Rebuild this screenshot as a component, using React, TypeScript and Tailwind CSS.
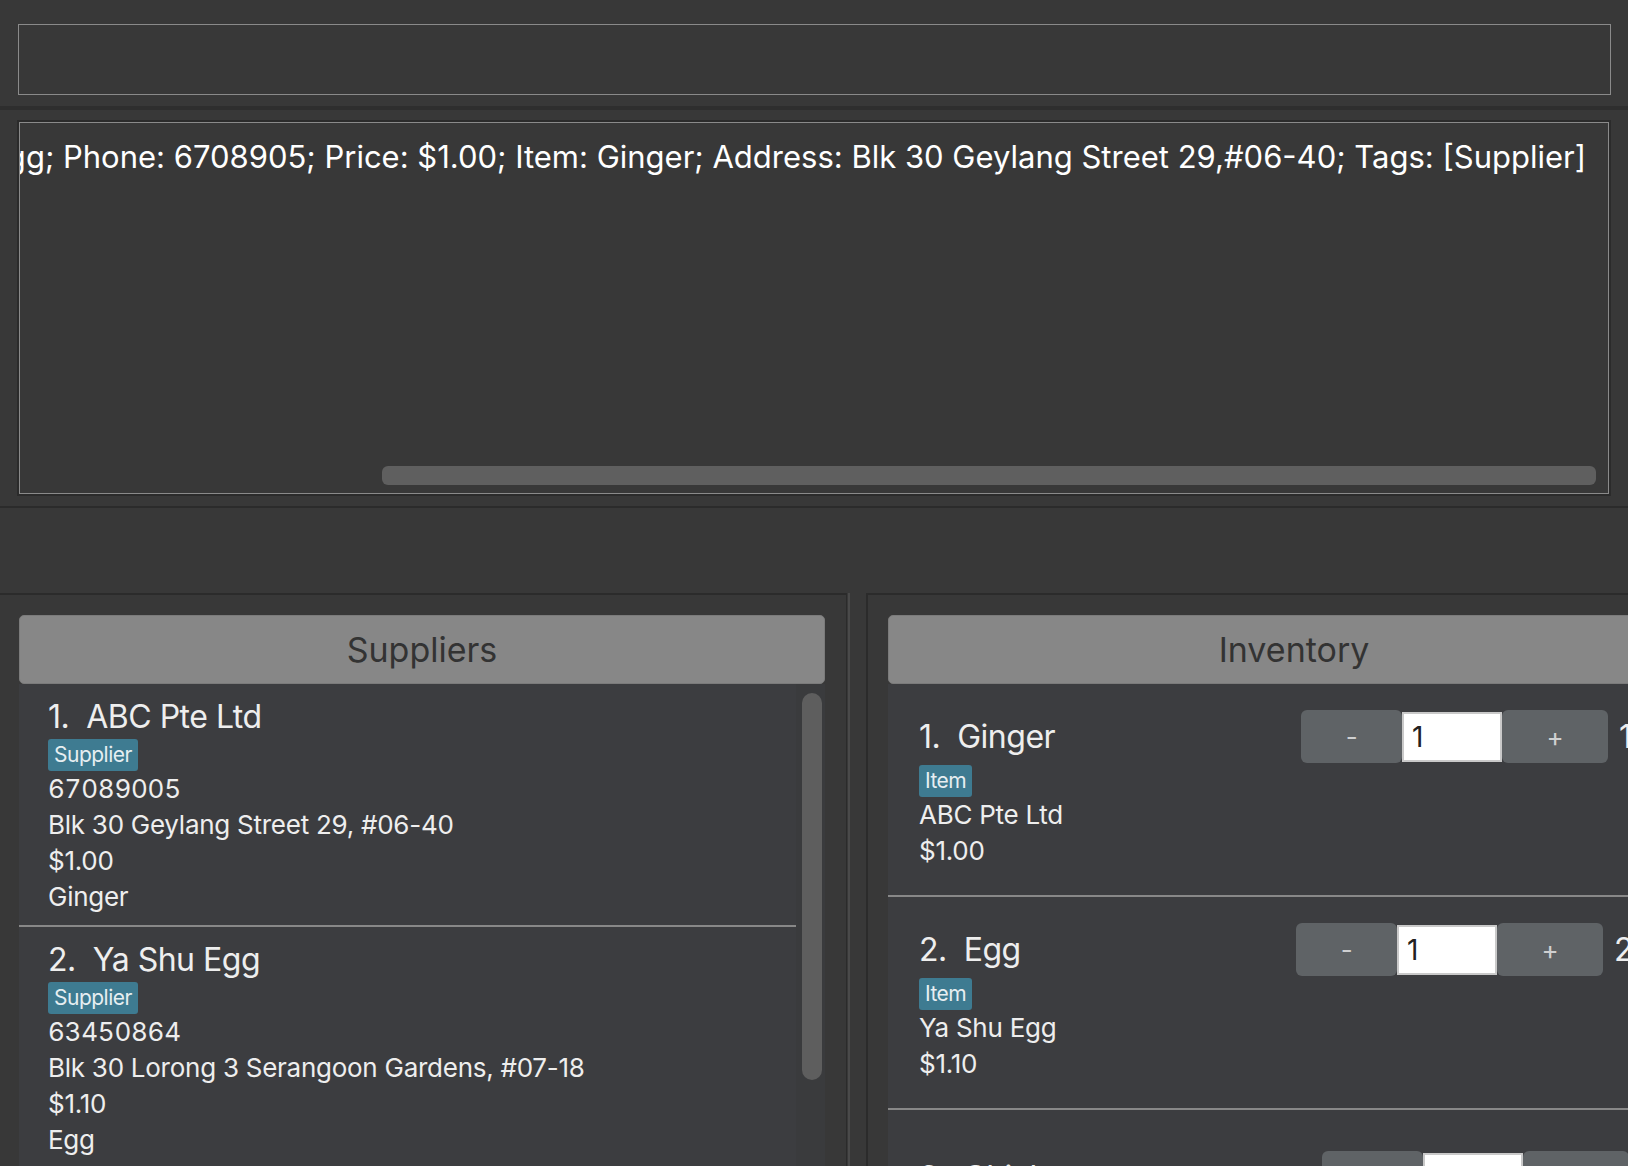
import React from 'react'

const SUPPLIERS = [
  {
    name: 'ABC Pte Ltd',
    phone: '67089005',
    address: 'Blk 30 Geylang Street 29, #06-40',
    price: '$1.00',
    item: 'Ginger',
  },
  {
    name: 'Ya Shu Egg',
    phone: '63450864',
    address: 'Blk 30 Lorong 3 Serangoon Gardens, #07-18',
    price: '$1.10',
    item: 'Egg',
  },
]

// titleWidth puts the quantity stepper where each row has it
const ITEMS = [
  { name: 'Ginger', supplier: 'ABC Pte Ltd', price: '$1.00', qty: '1', titleWidth: 'w-[382px]', pad: 'pt-[26px]' },
  { name: 'Egg', supplier: 'Ya Shu Egg', price: '$1.10', qty: '2', titleWidth: 'w-[377px]', pad: 'pt-[26px]' },
  { name: 'Chicken', supplier: 'Ya Shu Egg', price: '$2.50', qty: '3', titleWidth: 'w-[403px]', pad: 'pt-[41px]' },
]

const RESULT =
  'New supplier added: Name: Ya Shu Egg; Phone: 6708905; Price: $1.00; Item: Ginger; Address: Blk 30 Geylang Street 29,#06-40; Tags: [Supplier]'

function Tag({ text }: { text: string }) {
  return (
    <span className="mt-[2px] self-start h-[32px] px-[6px] rounded-[3px] bg-[#3e7b91] text-[21px] leading-[32px] tracking-[-0.5px] text-[#e6eef1]">
      {text}
    </span>
  )
}

function PanelHeader({ title }: { title: string }) {
  return (
    <div className="h-[69px] shrink-0 rounded-[5px] border border-[#7b7b7b] bg-[#878787] flex items-center justify-center text-[34px] text-[#333333]">
      {title}
    </div>
  )
}

function SupplierCell({ s, i }: { s: (typeof SUPPLIERS)[number]; i: number }) {
  return (
    <div className="border-b-2 border-[#888888] pl-[29px] pt-[13px] pb-[10px] flex flex-col text-[#eeeeee] text-[26px] leading-[36px] tracking-[-0.01em]">
      <div className="text-[32px] leading-[40px] tracking-[-0.5px]">
        {i + 1}.&nbsp; {s.name}
      </div>
      <Tag text="Supplier" />
      <div className="tabular-nums">{s.phone}</div>
      <div>{s.address}</div>
      <div>{s.price}</div>
      <div>{s.item}</div>
    </div>
  )
}

function ItemCell({ it, i }: { it: (typeof ITEMS)[number]; i: number }) {
  return (
    <div
      className={`border-b-2 border-[#888888] pl-[31px] pb-[26px] flex flex-col text-[#eeeeee] text-[26px] leading-[36px] tracking-[-0.01em] ${it.pad}`}
    >
      <div className="h-[53px] flex items-center">
        <div className={`shrink-0 text-[32px] leading-[40px] tracking-[-0.5px] ${it.titleWidth}`}>
          {i + 1}.&nbsp; {it.name}
        </div>
        <button className="w-[101px] h-[53px] shrink-0 rounded-[6px] bg-[#5f6366] text-[26px] text-[#cfd0d1]">
          -
        </button>
        <div className="w-[100px] h-[50px] shrink-0 bg-white border-2 border-[#c9c9c9] pl-[8px] flex items-center text-[28px] text-[#222222]">
          1
        </div>
        <button className="w-[106px] h-[53px] shrink-0 rounded-[6px] bg-[#5f6366] text-[26px] text-[#cfd0d1]">
          +
        </button>
        <span className="ml-[11px] text-[32px]">{it.qty}</span>
      </div>
      <Tag text="Item" />
      <div>{it.supplier}</div>
      <div>{it.price}</div>
    </div>
  )
}

export default function App() {
  return (
    <div
      className="w-[1628px] h-[1166px] overflow-hidden bg-[#383838] flex flex-col"
      style={{ fontFamily: 'Inter, "Noto Sans", sans-serif' }}
    >
      {/* command box */}
      <div className="h-[106px] shrink-0 pt-[24px] pl-[18px] pr-[17px]">
        <div className="h-[71px] border border-[#8a8a8a]" />
      </div>
      <div className="h-[4px] shrink-0 bg-[#2e2e2e]" />

      {/* result display */}
      <div className="h-[398px] shrink-0 pt-[10px] pb-[10px] px-[17px] border-b-2 border-[#2b2b2b]">
        <div className="h-full border-2 border-[#2b2b2b]">
          <div className="h-full border border-[#8a8a8a] flex flex-col overflow-hidden">
            <div className="flex justify-end pr-[22px] pt-[15px] whitespace-nowrap text-[31px] leading-[38px] text-white">
              {RESULT}
            </div>
            <div className="flex-1" />
            <div className="pl-[362px] pr-[12px] pb-[8px]">
              <div className="h-[19px] rounded-[6px] bg-[#5f5f5f]" />
            </div>
          </div>
        </div>
      </div>

      {/* status area */}
      <div className="h-[85px] shrink-0" />

      {/* lists */}
      <div className="flex-1 min-h-0 flex">
        <div className="w-[847px] shrink-0 border-t-2 border-r border-[#2b2b2b] pt-[20px] pl-[19px] pr-[21px] flex flex-col">
          <PanelHeader title="Suppliers" />
          <div className="flex-1 min-h-0 flex">
            <div className="w-[777px] bg-[#3c3d40]">
              {SUPPLIERS.map((s, i) => (
                <SupplierCell key={s.name} s={s} i={i} />
              ))}
            </div>
            <div className="flex-1 bg-[#3a3b3d] pl-[6px] pr-[3px] pt-[9px]">
              <div className="h-[387px] rounded-full bg-[#5e5e5e]" />
            </div>
          </div>
        </div>
        <div className="w-[19px] shrink-0 pl-[1px]">
          <div className="h-full w-[2px] bg-[#4a4a4a]" />
        </div>
        <div className="flex-1 min-w-0 overflow-hidden border-t-2 border-l-2 border-[#2b2b2b] pt-[20px] pl-[20px]">
          <div className="w-[812px] h-full flex flex-col">
            <PanelHeader title="Inventory" />
            <div className="flex-1 bg-[#3c3d40]">
              {ITEMS.map((it, i) => (
                <ItemCell key={it.name} it={it} i={i} />
              ))}
            </div>
          </div>
        </div>
      </div>
    </div>
  )
}
